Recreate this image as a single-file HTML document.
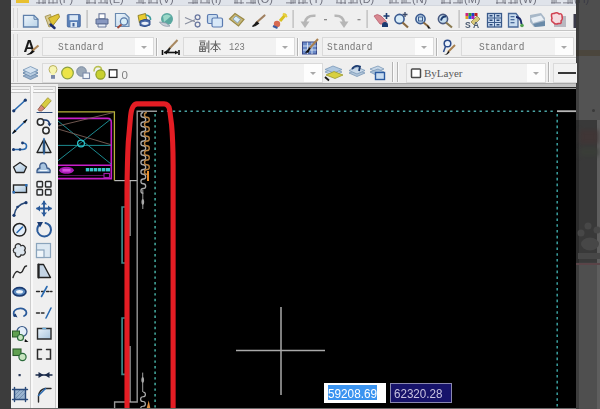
<!DOCTYPE html>
<html><head><meta charset="utf-8"><style>
*{margin:0;padding:0;box-sizing:border-box}
html,body{width:600px;height:409px;overflow:hidden;background:#3d3d3d;font-family:"Liberation Sans",sans-serif}
.a{position:absolute}
.hl{height:1px}
.grip{width:1px;background:#d6d6d6}
.combo{background:#f2f2f2;border:1px solid #dadada;font-family:"Liberation Mono",monospace;font-size:12px;color:#767676;overflow:hidden;white-space:nowrap}
.combo .ar{position:absolute;right:0;top:0;width:18px;height:100%;background:#fdfdfd}
.combo .ar:after{content:"";position:absolute;left:6px;top:8px;border-left:3.5px solid transparent;border-right:3.5px solid transparent;border-top:3.5px solid #a8a8a8}
.sep{width:2px;border-left:1px solid #b4b4b4;border-right:1px solid #fbfbfb}
.mt{position:absolute;top:-9px;font-size:12px;color:#1a1a1a;white-space:nowrap}
</style></head><body><div style="position:absolute;left:0;top:0;width:600px;height:409px;overflow:hidden;filter:blur(0.4px)">
<div class="a" style="left:0;top:0;width:11px;height:409px;background:#3c3c3c"></div>
<div class="a" style="left:576px;top:0;width:24px;height:50px;background:#4e4e4e"></div>
<div class="a" style="left:576px;top:50px;width:24px;height:6px;background:#4b463d"></div>
<div class="a" style="left:576px;top:56px;width:24px;height:64px;background:#535353"></div>
<div class="a" style="left:576px;top:120px;width:24px;height:142px;background:#393939"></div>
<div class="a" style="left:576px;top:264px;width:24px;height:145px;background:#4f4f4f"></div>
<div class="a" style="left:576px;top:0;width:3px;height:409px;background:rgba(0,0,0,0.22)"></div>
<div class="a" style="left:597px;top:120px;width:3px;height:289px;background:#5e5e5e"></div>
<div class="a" style="left:580px;top:130px;width:18px;height:14px;background:#403636;filter:blur(2px)"></div>
<div class="a" style="left:580px;top:148px;width:18px;height:8px;background:#3a3e38;filter:blur(2px)"></div>
<svg class="a" style="left:576px;top:200px" width="24" height="70"><g fill="#474747"><circle cx="12" cy="26" r="3.5"/><circle cx="21" cy="30" r="3.5"/><circle cx="5" cy="33" r="3.5"/><ellipse cx="14" cy="44" rx="9" ry="6.5"/><rect x="2" y="53" width="22" height="6"/></g><rect x="0" y="63" width="24" height="2" fill="#5a4448"/></svg>
<div class="a" style="left:592px;top:109px;width:3px;height:3px;border-radius:50%;background:#3a3a3a"></div>
<div class="a" style="left:11px;top:0;width:565px;height:89px;background:#efefef"></div>
<div class="a" style="left:11px;top:0;width:565px;height:5px;background:#dfe3ea;overflow:hidden"><div class="a" style="left:5px;top:0;width:13px;height:3px;background:#e8c030"></div></div>
<div class="a hl" style="left:11px;top:5px;width:565px;background:#d3d7de"></div>
<div class="a hl" style="left:11px;top:30px;width:565px;background:#c4c4c4"></div>
<div class="a hl" style="left:11px;top:31px;width:565px;background:#fafafa"></div>
<div class="a hl" style="left:11px;top:57px;width:565px;background:#c4c4c4"></div>
<div class="a hl" style="left:11px;top:58px;width:565px;background:#fafafa"></div>
<div class="a hl" style="left:11px;top:83px;width:565px;background:#a8a8a8"></div>
<div class="a" style="left:11px;top:84px;width:565px;height:3px;background:#ececec"></div>
<div class="a grip" style="left:13px;top:8px;height:20px"></div>
<div class="a grip" style="left:17px;top:8px;height:20px"></div>
<div class="a grip" style="left:13px;top:34px;height:22px"></div>
<div class="a grip" style="left:17px;top:34px;height:22px"></div>
<div class="a grip" style="left:13px;top:60px;height:22px"></div>
<div class="a grip" style="left:17px;top:60px;height:22px"></div>
<div class="a combo" style="left:42px;top:37px;width:112px;height:19px"><span class="a" style="left:15px;top:2px;font-size:11px;transform:scaleX(0.86);transform-origin:0 0;line-height:14px">Standard</span><div class="ar"></div></div>
<div class="a sep" style="left:156px;top:38px;height:18px"></div>
<div class="a combo" style="left:183px;top:37px;width:112px;height:19px"><span class="a" style="left:44.5px;top:2px;font-size:11px;line-height:14px;transform:scaleX(0.8);transform-origin:0 0;color:#7a7a7a">123</span><div class="ar"></div></div>
<div class="a sep" style="left:297px;top:38px;height:18px"></div>
<div class="a combo" style="left:322px;top:37px;width:112px;height:19px"><span class="a" style="left:4px;top:2px;font-size:11px;transform:scaleX(0.86);transform-origin:0 0;line-height:14px">Standard</span><div class="ar"></div></div>
<div class="a sep" style="left:436px;top:38px;height:18px"></div>
<div class="a combo" style="left:461px;top:37px;width:113px;height:19px"><span class="a" style="left:17px;top:2px;font-size:11px;transform:scaleX(0.86);transform-origin:0 0;line-height:14px">Standard</span><div class="ar"></div></div>
<div class="a combo" style="left:42px;top:63px;width:281px;height:20px"><div class="ar"></div></div>
<div class="a sep" style="left:392px;top:62px;height:20px"></div>
<div class="a sep" style="left:397px;top:62px;height:20px"></div>
<div class="a combo" style="left:406px;top:63px;width:140px;height:20px"><span class="a" style="left:17px;top:3px;font-family:Liberation Serif;font-size:11px;line-height:13px;color:#5a5a5a">ByLayer</span><div class="ar"></div></div>
<div class="a sep" style="left:548px;top:62px;height:20px"></div>
<div class="a combo" style="left:553px;top:63px;width:24px;height:20px;border-right:none"></div>
<div class="a" style="left:11px;top:84px;width:47px;height:325px;background:#efefef"></div>
<div class="a" style="left:11px;top:86px;width:20px;height:1px;background:#c4c4c4"></div>
<div class="a" style="left:12px;top:89px;width:17px;height:1px;background:#cacaca"></div>
<div class="a" style="left:12px;top:90px;width:17px;height:2px;background:#fbfbfb"></div>
<div class="a" style="left:11px;top:92px;width:20px;height:1px;background:#c2c2c2"></div>
<div class="a" style="left:33px;top:86px;width:22px;height:1px;background:#c4c4c4"></div>
<div class="a" style="left:34px;top:89px;width:19px;height:1px;background:#cacaca"></div>
<div class="a" style="left:34px;top:90px;width:19px;height:2px;background:#fbfbfb"></div>
<div class="a" style="left:33px;top:92px;width:22px;height:1px;background:#c2c2c2"></div>
<div class="a" style="left:30px;top:86px;width:1px;height:323px;background:#cdcdcd"></div>
<div class="a" style="left:31px;top:86px;width:2px;height:323px;background:#f8f8f8"></div>
<div class="a" style="left:55px;top:86px;width:1px;height:323px;background:#c8c8c8"></div>
<div class="a" style="left:56px;top:86px;width:2px;height:323px;background:#f4f4f4"></div>
<div class="a" style="left:58px;top:84px;width:518px;height:3px;background:#c6c6c6"></div>
<div class="a" style="left:58px;top:87px;width:518px;height:1px;background:#2e2e2e"></div>
<div class="a" style="left:58px;top:88px;width:518px;height:1px;background:#9a9a9a"></div>
<div class="a" style="left:58px;top:89px;width:518px;height:320px;background:#000"></div>
<div class="a" style="left:11px;top:408px;width:565px;height:1px;background:#6a6a6a"></div>
<svg class="a" style="left:0;top:0" width="600" height="409" viewBox="0 0 600 409">
<defs>
<linearGradient id="lb" x1="0" y1="0" x2="1" y2="1"><stop offset="0" stop-color="#eef5fb"/><stop offset="1" stop-color="#b9d3e8"/></linearGradient>
<linearGradient id="yl" x1="0" y1="0" x2="1" y2="1"><stop offset="0" stop-color="#f4e070"/><stop offset="1" stop-color="#c8a820"/></linearGradient>
</defs>
<!-- menu text fragments -->
<g fill="#303040" opacity="0.65">
<rect x="36" y="2.3" width="10" height="1.1" opacity="0.75"/>
<rect x="38.5" y="0" width="1.1" height="4" opacity="0.8"/>
<rect x="44.5" y="0" width="1.1" height="3.5" opacity="0.8"/>
<rect x="42.5" y="0" width="1.1" height="4" opacity="0.8"/>
<rect x="48" y="2.3" width="10" height="1.1" opacity="0.75"/>
<rect x="56.5" y="0" width="1.1" height="2.5" opacity="0.8"/>
<rect x="48.5" y="0" width="1.1" height="3.5" opacity="0.8"/>
<rect x="52.5" y="0" width="1.1" height="3.5" opacity="0.8"/>
<text x="59" y="3.2" font-family="Liberation Sans" font-size="11" fill="#303040">(F)</text>
<rect x="86" y="2.3" width="10" height="1.1" opacity="0.75"/>
<rect x="94.5" y="0" width="1.1" height="4" opacity="0.8"/>
<rect x="88.5" y="0" width="1.1" height="3.5" opacity="0.8"/>
<rect x="86.5" y="0" width="1.1" height="4" opacity="0.8"/>
<rect x="98" y="2.3" width="10" height="1.1" opacity="0.75"/>
<rect x="106.5" y="0" width="1.1" height="4" opacity="0.8"/>
<rect x="104.5" y="0" width="1.1" height="2.5" opacity="0.8"/>
<rect x="100.5" y="0" width="1.1" height="2.5" opacity="0.8"/>
<text x="109" y="3.2" font-family="Liberation Sans" font-size="11" fill="#303040">(E)</text>
<rect x="136" y="2.3" width="10" height="1.1" opacity="0.75"/>
<rect x="138.5" y="0" width="1.1" height="2.5" opacity="0.8"/>
<rect x="142.5" y="0" width="1.1" height="4" opacity="0.8"/>
<rect x="140.5" y="0" width="1.1" height="2.5" opacity="0.8"/>
<rect x="148" y="2.3" width="10" height="1.1" opacity="0.75"/>
<rect x="150.5" y="0" width="1.1" height="2.5" opacity="0.8"/>
<rect x="148.5" y="0" width="1.1" height="3.5" opacity="0.8"/>
<rect x="156.5" y="0" width="1.1" height="3.5" opacity="0.8"/>
<text x="159" y="3.2" font-family="Liberation Sans" font-size="11" fill="#303040">(V)</text>
<rect x="188" y="2.3" width="10" height="1.1" opacity="0.75"/>
<rect x="196.5" y="0" width="1.1" height="3.5" opacity="0.8"/>
<rect x="194.5" y="0" width="1.1" height="3.5" opacity="0.8"/>
<rect x="192.5" y="0" width="1.1" height="4" opacity="0.8"/>
<rect x="200" y="2.3" width="10" height="1.1" opacity="0.75"/>
<rect x="208.5" y="0" width="1.1" height="3.5" opacity="0.8"/>
<rect x="206.5" y="0" width="1.1" height="2.5" opacity="0.8"/>
<rect x="200.5" y="0" width="1.1" height="2.5" opacity="0.8"/>
<text x="211" y="3.2" font-family="Liberation Sans" font-size="11" fill="#303040">(I)</text>
<rect x="234" y="2.3" width="10" height="1.1" opacity="0.75"/>
<rect x="236.5" y="0" width="1.1" height="3.5" opacity="0.8"/>
<rect x="240.5" y="0" width="1.1" height="4" opacity="0.8"/>
<rect x="234.5" y="0" width="1.1" height="3.5" opacity="0.8"/>
<rect x="246" y="2.3" width="10" height="1.1" opacity="0.75"/>
<rect x="250.5" y="0" width="1.1" height="3.5" opacity="0.8"/>
<rect x="252.5" y="0" width="1.1" height="4" opacity="0.8"/>
<rect x="254.5" y="0" width="1.1" height="3.5" opacity="0.8"/>
<text x="257" y="3.2" font-family="Liberation Sans" font-size="11" fill="#303040">(O)</text>
<rect x="286" y="2.3" width="10" height="1.1" opacity="0.75"/>
<rect x="294.5" y="0" width="1.1" height="2.5" opacity="0.8"/>
<rect x="292.5" y="0" width="1.1" height="3.5" opacity="0.8"/>
<rect x="290.5" y="0" width="1.1" height="4" opacity="0.8"/>
<rect x="298" y="2.3" width="10" height="1.1" opacity="0.75"/>
<rect x="298.5" y="0" width="1.1" height="4" opacity="0.8"/>
<rect x="302.5" y="0" width="1.1" height="4" opacity="0.8"/>
<rect x="304.5" y="0" width="1.1" height="2.5" opacity="0.8"/>
<text x="309" y="3.2" font-family="Liberation Sans" font-size="11" fill="#303040">(T)</text>
<rect x="336" y="2.3" width="10" height="1.1" opacity="0.75"/>
<rect x="340.5" y="0" width="1.1" height="4" opacity="0.8"/>
<rect x="336.5" y="0" width="1.1" height="2.5" opacity="0.8"/>
<rect x="344.5" y="0" width="1.1" height="4" opacity="0.8"/>
<rect x="348" y="2.3" width="10" height="1.1" opacity="0.75"/>
<rect x="356.5" y="0" width="1.1" height="2.5" opacity="0.8"/>
<rect x="352.5" y="0" width="1.1" height="2.5" opacity="0.8"/>
<rect x="350.5" y="0" width="1.1" height="3.5" opacity="0.8"/>
<text x="359" y="3.2" font-family="Liberation Sans" font-size="11" fill="#303040">(D)</text>
<rect x="389" y="2.3" width="10" height="1.1" opacity="0.75"/>
<rect x="395.5" y="0" width="1.1" height="2.5" opacity="0.8"/>
<rect x="389.5" y="0" width="1.1" height="3.5" opacity="0.8"/>
<rect x="391.5" y="0" width="1.1" height="2.5" opacity="0.8"/>
<rect x="401" y="2.3" width="10" height="1.1" opacity="0.75"/>
<rect x="401.5" y="0" width="1.1" height="3.5" opacity="0.8"/>
<rect x="405.5" y="0" width="1.1" height="2.5" opacity="0.8"/>
<rect x="403.5" y="0" width="1.1" height="2.5" opacity="0.8"/>
<text x="412" y="3.2" font-family="Liberation Sans" font-size="11" fill="#303040">(N)</text>
<rect x="441" y="2.3" width="10" height="1.1" opacity="0.75"/>
<rect x="449.5" y="0" width="1.1" height="4" opacity="0.8"/>
<rect x="441.5" y="0" width="1.1" height="4" opacity="0.8"/>
<rect x="443.5" y="0" width="1.1" height="3.5" opacity="0.8"/>
<rect x="453" y="2.3" width="10" height="1.1" opacity="0.75"/>
<rect x="461.5" y="0" width="1.1" height="2.5" opacity="0.8"/>
<rect x="457.5" y="0" width="1.1" height="2.5" opacity="0.8"/>
<rect x="459.5" y="0" width="1.1" height="3.5" opacity="0.8"/>
<text x="464" y="3.2" font-family="Liberation Sans" font-size="11" fill="#303040">(M)</text>
<rect x="496" y="2.3" width="10" height="1.1" opacity="0.75"/>
<rect x="496.5" y="0" width="1.1" height="4" opacity="0.8"/>
<rect x="504.5" y="0" width="1.1" height="4" opacity="0.8"/>
<rect x="502.5" y="0" width="1.1" height="2.5" opacity="0.8"/>
<rect x="508" y="2.3" width="10" height="1.1" opacity="0.75"/>
<rect x="510.5" y="0" width="1.1" height="4" opacity="0.8"/>
<rect x="514.5" y="0" width="1.1" height="3.5" opacity="0.8"/>
<rect x="516.5" y="0" width="1.1" height="2.5" opacity="0.8"/>
<text x="519" y="3.2" font-family="Liberation Sans" font-size="11" fill="#303040">(W)</text>
<rect x="551" y="2.3" width="10" height="1.1" opacity="0.75"/>
<rect x="551.5" y="0" width="1.1" height="3.5" opacity="0.8"/>
<rect x="555.5" y="0" width="1.1" height="2.5" opacity="0.8"/>
<rect x="553.5" y="0" width="1.1" height="3.5" opacity="0.8"/>
<rect x="563" y="2.3" width="10" height="1.1" opacity="0.75"/>
<rect x="569.5" y="0" width="1.1" height="3.5" opacity="0.8"/>
<rect x="571.5" y="0" width="1.1" height="4" opacity="0.8"/>
<rect x="567.5" y="0" width="1.1" height="4" opacity="0.8"/>
<text x="574" y="3.2" font-family="Liberation Sans" font-size="11" fill="#303040">(H)</text>
</g>
<!-- toolbar 1 -->
<path d="M23.5,15.3 H34 L38,19.3 V27 H23.5 Z" fill="url(#lb)" stroke="#5f80ab" stroke-width="1.3"/>
<path d="M34,15.3 V19.3 H38" fill="none" stroke="#5f80ab" stroke-width="1"/>
<path d="M45,16.5 L50.5,14.5 L53,25.5 L49,27 Z" fill="#d8cc98" stroke="#a89858" stroke-width="1"/>
<path d="M48.5,18 L58.5,14 L59.5,17 L52.5,26 Z" fill="#e0c438" stroke="#a89028" stroke-width="1"/>
<path d="M50.5,24.5 L54.5,28" stroke="#1e2e70" stroke-width="2.5" stroke-linecap="round"/>
<rect x="67.3" y="14.5" width="13" height="12.5" rx="1" fill="#5a80b8" stroke="#40629a" stroke-width="0.8"/>
<rect x="69.5" y="15.2" width="8.5" height="5" fill="#dce8f4"/>
<rect x="70.5" y="22" width="6.5" height="5" fill="#dce8f4"/><rect x="72.5" y="23" width="2" height="3.5" fill="#40629a"/>
<rect x="86.5" y="10" width="1.2" height="18" fill="#b8b8b8"/>
<!-- print -->
<rect x="99" y="13.8" width="6" height="5" fill="#fff" stroke="#5a6a90" stroke-width="1"/>
<path d="M96,19 H108 V24 H96 Z" fill="#8898c0" stroke="#5a6a90" stroke-width="1"/>
<path d="M98,24 H106 V27 H98 Z" fill="#e8eef8" stroke="#5a6a90" stroke-width="0.9"/>
<!-- preview -->
<path d="M115.5,13.5 H125 L129,17.5 V26.5 H115.5 Z" fill="url(#lb)" stroke="#6a8ab0" stroke-width="1.2"/>
<circle cx="124" cy="21.5" r="3.6" fill="#d8eef8" stroke="#5a7aa8" stroke-width="1.3"/>
<line x1="121.5" y1="24.5" x2="117.5" y2="28" stroke="#a04838" stroke-width="1.8"/>
<!-- publish -->
<path d="M138,15.5 L145.5,13.5 L147,21.5 L139.5,23 Z" fill="#e8cc30" stroke="#8a7a20" stroke-width="0.9"/>
<path d="M140,21 Q145,18 150,20.5 V25 Q145,28 140,25.5 Z" fill="#4a6aa8" stroke="#2a4a88" stroke-width="0.9"/>
<path d="M141.5,22.5 Q145,21 148.5,22.5 V24 Q145,26 141.5,24 Z" fill="#e8eef8"/>
<path d="M146,15 Q151,16 150.5,20" stroke="#3a9a9a" stroke-width="1.6" fill="none"/>
<!-- 3D dwf -->
<circle cx="167" cy="19" r="6" fill="#5aa8a0"/>
<path d="M163,16 Q167,13 171,16 Q168,19 164,22 Z" fill="#9ad8c8"/>
<path d="M159.5,22 Q163,27.5 170,26 L166,23 Z" fill="#c8d0d8" stroke="#8a98a8" stroke-width="0.8"/>
<rect x="178.5" y="10" width="1.2" height="18" fill="#b8b8b8"/>
<!-- cut -->
<path d="M185,17.5 L195,21.8 M185,24 L195,19.8" stroke="#8a90a0" stroke-width="1.2" fill="none"/>
<circle cx="197.6" cy="17.2" r="2.4" fill="none" stroke="#6a78a0" stroke-width="1.3"/>
<circle cx="197.6" cy="24.6" r="2.4" fill="none" stroke="#6a78a0" stroke-width="1.3"/>
<!-- copy -->
<rect x="207.5" y="14.5" width="10" height="9" rx="1.5" fill="#c8dcf0" stroke="#5a7ab0" stroke-width="1.2"/>
<rect x="212" y="18" width="10.5" height="9" rx="1.5" fill="#d8e8f8" stroke="#5a7ab0" stroke-width="1.2"/>
<!-- paste -->
<path d="M229.5,19 L235,13.5 L244,19.5 L238.5,26 Z" fill="#c8b878" stroke="#9a8a48" stroke-width="1.2"/>
<path d="M233,19 L236,16 L240.5,19.5 L237.5,23 Z" fill="#d8ecf8" stroke="#7a9ab8" stroke-width="0.8"/>
<!-- brush -->
<path d="M264.5,15.5 L256,23" stroke="#a08060" stroke-width="2.2" stroke-linecap="round"/>
<path d="M257,22 L252.5,26.5 L255.5,25.5 L258.5,23.5 Z" fill="#1a1a1a" stroke="#1a1a1a" stroke-width="1.2"/>
<!-- brush2 -->
<path d="M286,14 L280,21" stroke="#d8c020" stroke-width="3"/>
<path d="M283,13.5 L287,17" stroke="#e8d040" stroke-width="2"/>
<circle cx="277" cy="24" r="3.2" fill="#d86a50"/>
<path d="M273,26 L277.5,28" stroke="#3a5aa0" stroke-width="2"/>
<rect x="292.5" y="10" width="1.2" height="18" fill="#b8b8b8"/>
<!-- undo/redo -->
<path d="M315.5,15.8 Q306,15 305,22.5" fill="none" stroke="#b6b6b6" stroke-width="2.6"/>
<path d="M300.5,21.5 L309.5,21.5 L305,28 Z" fill="#b6b6b6"/>
<path d="M334.5,15.8 Q343,15 344,22.5" fill="none" stroke="#b6b6b6" stroke-width="2.6"/>
<path d="M339.5,21.5 L348.5,21.5 L344,28 Z" fill="#b6b6b6"/>
<rect x="324" y="19" width="3" height="1.3" fill="#8a8a8a"/>
<rect x="357.5" y="19" width="3" height="1.3" fill="#8a8a8a"/>
<rect x="366.5" y="10" width="1.2" height="18" fill="#b8b8b8"/>
<!-- pan -->
<path d="M374,16 Q377,13 381,16 L386.5,21.5 Q384,25 380,24 Z" fill="#d88890" stroke="#b86070" stroke-width="0.8"/>
<path d="M382,25 A3,3 0 0 1 388,25 V27 H382 Z" fill="#1a3a70"/>
<path d="M386.5,13 V19 M383.5,16 H389.5" stroke="#1a3a70" stroke-width="1.6"/>
<!-- zoom realtime -->
<circle cx="399.5" cy="19" r="4.6" fill="#d8ecf8" stroke="#3a5a90" stroke-width="1.6"/>
<line x1="402.5" y1="22.5" x2="408" y2="27.5" stroke="#8a6a40" stroke-width="2.2"/>
<path d="M405,12 V17 M402.5,14.5 H407.5" stroke="#3a4a6a" stroke-width="1.3"/>
<!-- zoom window -->
<circle cx="420.5" cy="19" r="4.6" fill="#c8e0f0" stroke="#3a5a90" stroke-width="1.6"/>
<rect x="418.5" y="17" width="4" height="4" fill="none" stroke="#3a5a90" stroke-width="1"/>
<line x1="423.5" y1="22.5" x2="429" y2="27" stroke="#8a6a40" stroke-width="2"/>
<path d="M427,25 L431,28.5 L428,28.5 Z" fill="#111"/>
<!-- zoom prev -->
<circle cx="443" cy="19" r="4.6" fill="#c8e0f0" stroke="#4a5a80" stroke-width="1.6"/>
<path d="M441,20.5 Q442,16 446,16.5" fill="none" stroke="#1a3a70" stroke-width="2"/>
<line x1="446" y1="22.5" x2="452" y2="27.5" stroke="#8a7a50" stroke-width="2.2"/>
<rect x="458.5" y="10" width="1.2" height="18" fill="#b8b8b8"/>
<!-- properties -->
<rect x="465.5" y="13" width="3" height="3" fill="#d02080"/><rect x="468.5" y="13" width="3" height="3" fill="#30a030"/><rect x="471.5" y="13" width="3" height="3" fill="#2040c0"/><rect x="474.5" y="13" width="3" height="3" fill="#c02020"/>
<rect x="465.5" y="16" width="3" height="3" fill="#e0a020"/><rect x="468.5" y="16" width="3" height="3" fill="#2060e0"/><rect x="471.5" y="16" width="3" height="3" fill="#a020c0"/>
<path d="M477,16 L480,19 L474,25 L471,22 Z" fill="#d8c878" stroke="#8a7a40" stroke-width="0.7"/>
<text x="465" y="27.5" font-family="Liberation Sans" font-size="8.5" font-weight="bold" fill="#4a5a70">S</text>
<text x="473" y="27.5" font-family="Liberation Sans" font-size="8.5" font-weight="bold" fill="#4a5a70">A</text>
<!-- design center -->
<rect x="487.5" y="13.5" width="14" height="13.5" fill="#c8daf0" stroke="#3a5a8a" stroke-width="1.3"/>
<g stroke="#3a5a8a" stroke-width="1"><line x1="494.5" y1="14" x2="494.5" y2="27"/><line x1="488" y1="18" x2="501" y2="18"/><line x1="488" y1="22.5" x2="501" y2="22.5"/></g>
<g fill="#2a4a7a"><rect x="489.5" y="15" width="3" height="1.5"/><rect x="496.5" y="15" width="3" height="1.5"/><rect x="489.5" y="19.5" width="3" height="1.5"/><rect x="496.5" y="19.5" width="3" height="1.5"/><rect x="489.5" y="24" width="3" height="1.5"/><rect x="496.5" y="24" width="3" height="1.5"/></g>
<!-- tool palettes -->
<path d="M508.5,13.5 H516 L518,16 V27 H508.5 Z" fill="#c8dcf0" stroke="#4a6a9a" stroke-width="1.3"/>
<g fill="#4a6a9a"><rect x="510.5" y="16" width="4" height="1.3"/><rect x="510.5" y="19" width="4" height="1.3"/><rect x="510.5" y="22" width="4" height="1.3"/></g>
<path d="M516,17 Q521,17 521.5,24" fill="none" stroke="#1a2a6a" stroke-width="2"/>
<circle cx="522" cy="25.5" r="1.8" fill="#50a050"/>
<!-- sheet set -->
<path d="M530,15 L541,13 L545,18 L545,26 L534,27 L530,22 Z" fill="#a8b8c8"/>
<path d="M531,18 L541,15.5 L544,20 L533,23 Z" fill="#e8eef4"/>
<path d="M533,24 L545,21 V26 L535,27 Z" fill="#6a8aa8"/>
<!-- markup -->
<rect x="554" y="16" width="12" height="11" fill="#b8b8c0"/>
<path d="M551.5,16 Q551,13 554,13.5 Q557,12 559,14 Q562,13 562,16 Q563,19 561,21 Q562,24 558.5,23.5 Q555,25 553.5,22.5 Q550.5,21 552,18.5 Z" fill="#f4dce0" stroke="#d04050" stroke-width="1.5"/>
<!-- toolbar 2 icons -->
<text x="23.5" y="52" font-family="Liberation Sans" font-size="16" font-weight="bold" fill="#1a1a1a">A</text>
<path d="M38.5,45.5 L32,51" stroke="#b08858" stroke-width="2.2"/>
<path d="M32.5,50 Q30,53.5 26.5,54.5 Q31,55.5 34,52 Z" fill="#101010"/>
<path d="M177.5,40 L169,49" stroke="#a88860" stroke-width="2"/>
<path d="M170,48 L166.5,51.5 L168.5,51 Z" fill="#222" stroke="#222" stroke-width="1.5"/>
<path d="M164,52.5 H178" stroke="#101010" stroke-width="1.6"/>
<path d="M162.5,50 V55 M179,50 V55" stroke="#101010" stroke-width="1.6"/>
<path d="M164,52.5 L167,50.5 V54.5 Z M178,52.5 L175,50.5 V54.5 Z" fill="#101010"/>
<!-- table style -->
<rect x="302.5" y="42" width="14" height="12" fill="#6a8ac8" stroke="#3a4a8a" stroke-width="1"/>
<g stroke="#dce6f4" stroke-width="0.9"><line x1="303" y1="46" x2="316.5" y2="46"/><line x1="303" y1="50" x2="316.5" y2="50"/><line x1="307.5" y1="42.5" x2="307.5" y2="54"/><line x1="312" y1="42.5" x2="312" y2="54"/></g>
<path d="M318,39 L309,49" stroke="#a88050" stroke-width="2"/>
<path d="M310,48 L306.5,52 L308,52 Z" fill="#111" stroke="#111" stroke-width="1.4"/>
<!-- multileader style -->
<circle cx="447.5" cy="43.5" r="3.3" fill="#e8f0fa" stroke="#2a4a8a" stroke-width="1.5"/>
<path d="M445.5,46.5 L443.5,52" stroke="#2a4a8a" stroke-width="1.5"/>
<path d="M455,45 L448,52" stroke="#a88050" stroke-width="2"/>
<path d="M448.5,51 Q447,54 444,55 Q447.5,55 449.5,52.5 Z" fill="#111"/>
<!-- dim arrow in combos drawn by css -->
<g stroke="#6a6a6a" stroke-width="1.1" fill="none">
<path d="M199.5,41 H205.5 M200.5,42.8 H204.5 V45 H200.5 Z M199.7,46.8 H205.3 V51.5 H199.7 Z M202.5,46.8 V51.5 M199.7,49.1 H205.3 M207,42.5 V49 M208.8,40.5 V52 L207.8,51.5"/>
<path d="M210.5,44 H220.5 M215.5,40.5 V52 M215,44.5 L210.5,50 M216,44.5 L220.5,50 M213,49.5 H218"/>
</g>
<!-- toolbar 3 icons -->
<path d="M23,73 L30.5,69.5 L38,73 L30.5,76.5 Z" fill="#a8bcd4" stroke="#6a88a8" stroke-width="0.8"/>
<path d="M23,70.5 L30.5,67 L38,70.5 L30.5,74 Z" fill="#c4d4e6" stroke="#7a98b8" stroke-width="0.8"/>
<path d="M23,76 L30.5,72.5 L38,76 L30.5,79.5 Z" fill="#98b0cc" stroke="#6a88a8" stroke-width="0.8"/>
<path d="M23,73 L30.5,69.5 L38,73 L30.5,76.5 Z" fill="#b8cce0" stroke="#6a88a8" stroke-width="0.8"/>
<path d="M23,70 L30.5,66.5 L38,70 L30.5,73.5 Z" fill="#d4e2f0" stroke="#7a98b8" stroke-width="0.8"/>
<!-- bulb -->
<circle cx="53" cy="69.5" r="4" fill="#f6f4b0" stroke="#b8b060" stroke-width="1"/>
<path d="M50.5,72 L51.5,75 H54.5 L55.5,72 Z" fill="#f6f4b0"/>
<rect x="51" y="75" width="4" height="3.8" fill="#7a88a8"/>
<!-- sun -->
<circle cx="67.5" cy="73" r="5.8" fill="#ece448" stroke="#8aa040" stroke-width="1.2"/>
<!-- freeze -->
<circle cx="81.5" cy="71.5" r="4.8" fill="#9aa8b8" stroke="#7a8aa0" stroke-width="1"/>
<rect x="83" y="73" width="6.5" height="5.5" fill="#f4f8fc" stroke="#7a8aa8" stroke-width="1.1"/>
<!-- lock -->
<path d="M94,71.5 Q94,66.5 98.5,66.5 Q102,67 101.5,71" fill="none" stroke="#b8c050" stroke-width="1.4"/>
<circle cx="100.5" cy="74.5" r="4.6" fill="#c8d030" stroke="#8a9a20" stroke-width="1.1"/>
<rect x="109.3" y="69.8" width="7.6" height="7.6" fill="#fff" stroke="#2a2a2a" stroke-width="1.3"/>
<text x="121.5" y="78.5" font-family="Liberation Sans" font-size="11.5" fill="#808080">0</text>
<!-- layer make current etc -->
<path d="M325,72 L333,68.5 L342,72 L334,75.5 Z" fill="#c8d8e8" stroke="#7a98b8" stroke-width="0.8"/>
<path d="M325,69.5 L333,66 L342,69.5 L334,73 Z" fill="#b0c8e0" stroke="#7a98b8" stroke-width="0.8"/>
<path d="M326,75 L334,71.5 L343,75 L335,78.5 Z" fill="#d8d040" stroke="#9a9a30" stroke-width="0.8"/>
<path d="M325,77 L329,80.5" stroke="#1a1a1a" stroke-width="1.8"/>
<path d="M349,73 L357,69.5 L365,73 L357,76.5 Z" fill="#b0c4d8" stroke="#7a98b8" stroke-width="0.8"/>
<path d="M349,70.5 L357,67 L365,70.5 L357,74 Z" fill="#c8d8e8" stroke="#7a98b8" stroke-width="0.8"/>
<path d="M352,69 Q355,64.5 360,66.5 L359,71" fill="none" stroke="#1a3a70" stroke-width="1.8"/>
<path d="M370,69 L378,66 L384,69 L376,72 Z" fill="#c8d8e8" stroke="#7a98b8" stroke-width="0.8"/>
<path d="M370,72 L378,69 L384,72 L376,75 Z" fill="#a8c0d8" stroke="#7a98b8" stroke-width="0.8"/>
<rect x="375.5" y="72.5" width="9" height="7" fill="#c8dcf0" stroke="#2a5aa0" stroke-width="1.4"/>
<rect x="411.5" y="69" width="9" height="8.5" rx="0.8" fill="#fff" stroke="#4a4a4a" stroke-width="1.5"/>
<line x1="558" y1="73" x2="576" y2="73" stroke="#222" stroke-width="1.8"/>
<rect x="573.5" y="14" width="2.5" height="14" fill="#3a3a48"/>
</svg>

<svg class="a" style="left:0;top:0" width="600" height="409" viewBox="0 0 600 409">
<defs>
<linearGradient id="pb" x1="0" y1="0" x2="1" y2="1"><stop offset="0" stop-color="#e8f2fa"/><stop offset="1" stop-color="#a8c4dc"/></linearGradient>
</defs>
<g stroke-linecap="round">
<!-- panel 1 -->
<!-- line -->
<line x1="13.5" y1="111" x2="25.5" y2="100" stroke="#2a6ab0" stroke-width="1.6"/>
<circle cx="13.8" cy="110.8" r="1.6" fill="#1a3a70"/><circle cx="25.3" cy="100.2" r="1.6" fill="#1a3a70"/>
<!-- xline -->
<line x1="13" y1="133" x2="26.5" y2="120" stroke="#2a6ab0" stroke-width="1.6"/>
<path d="M12,134 L16.5,131.5 L14.5,129.5 Z" fill="#111"/><path d="M27.5,119 L23,121.5 L25,123.5 Z" fill="#111"/>
<!-- pline -->
<path d="M13,149.5 H22.5 Q26.5,149.5 26.5,146 Q26.5,143 22.5,143" fill="none" stroke="#2a6ab0" stroke-width="1.6"/>
<circle cx="13.5" cy="149.5" r="1.5" fill="#1a3a70"/><circle cx="20" cy="149.5" r="1.3" fill="#1a3a70"/><circle cx="22.5" cy="143" r="1.4" fill="#1a3a70"/>
<!-- polygon -->
<path d="M20,162.5 L26.5,167 L24,172.5 H16 L13.5,167 Z" fill="url(#pb)" stroke="#222" stroke-width="1.3" stroke-linejoin="round"/>
<!-- rect -->
<rect x="13.5" y="185" width="13" height="7.5" fill="url(#pb)" stroke="#222" stroke-width="1.4"/>
<rect x="12.5" y="191" width="2.5" height="2.5" fill="#2a6ab0"/><rect x="25" y="184" width="2.5" height="2.5" fill="#2a6ab0"/>
<!-- arc -->
<path d="M14,215.5 Q15.5,205 26,202.5" fill="none" stroke="#2a4a78" stroke-width="1.6"/>
<circle cx="14" cy="215.3" r="1.6" fill="#1a3a70"/><circle cx="26" cy="202.7" r="1.6" fill="#1a3a70"/><circle cx="17.5" cy="207" r="1.3" fill="#1a3a70"/>
<!-- circle -->
<circle cx="19.5" cy="229.8" r="6.3" fill="#e4eef8" stroke="#222" stroke-width="1.5"/>
<line x1="17" y1="232.5" x2="22.5" y2="227" stroke="#2a6ab0" stroke-width="1.6"/>
<!-- revcloud -->
<path d="M20.98,245.76 A2.9,2.9 0 0 1 24.50,250.23 A2.9,2.9 0 0 1 21.11,254.80 A2.9,2.9 0 0 1 15.50,253.15 A2.9,2.9 0 0 1 15.41,247.56 A2.9,2.9 0 0 1 20.98,245.76 Z" fill="#dde6ee" stroke="#333" stroke-width="1.3"/>
<!-- spline -->
<path d="M13,277.5 Q15.5,270 18.5,272 Q21.5,274.5 23.5,269 Q25,265.5 26.5,266" fill="none" stroke="#2a2a2a" stroke-width="1.4"/>
<!-- ellipse -->
<ellipse cx="19.5" cy="291.8" rx="6.5" ry="4.2" fill="#5a8ac0" stroke="#1a3a70" stroke-width="1.6"/>
<ellipse cx="19.5" cy="291.8" rx="3.5" ry="1.8" fill="#eef4fa"/>
<!-- ellipse arc -->
<path d="M14.5,316 Q12,311 17,309 Q23,307 26,311 Q27.5,314.5 24,316" fill="none" stroke="#2a5a9a" stroke-width="1.8"/>
<path d="M13,316 L17.5,317.5 L15.5,313.5 Z" fill="#1a3a70"/>
<!-- insert -->
<circle cx="22" cy="331.5" r="5" fill="#e4eef8" stroke="#3a5a88" stroke-width="1.2"/>
<rect x="12.5" y="331" width="7" height="6" fill="#60a050" stroke="#2a5a2a" stroke-width="1"/>
<circle cx="20.5" cy="337.5" r="3" fill="#c8e4c0" stroke="#2a6a3a" stroke-width="1.2"/>
<path d="M25,339 L28.5,342 L24.5,342 Z" fill="#111"/>
<!-- make block -->
<rect x="13" y="349" width="8" height="6.5" fill="#60a050" stroke="#2a5a2a" stroke-width="1.1"/>
<circle cx="22.5" cy="357" r="3.6" fill="#c8e4c0" stroke="#2a6a3a" stroke-width="1.2"/>
<!-- point -->
<rect x="18.5" y="374" width="2.2" height="2.2" fill="#2a3a5a"/>
<!-- hatch -->
<rect x="14.5" y="389.5" width="11" height="10" fill="#9ab4d0"/>
<g stroke="#6a88a8" stroke-width="0.8"><line x1="15" y1="395" x2="20" y2="390"/><line x1="15" y1="399" x2="24" y2="390"/><line x1="19" y1="399" x2="25" y2="393"/></g>
<g stroke="#2a4a7a" stroke-width="1.4"><line x1="12.5" y1="389.5" x2="27.5" y2="389.5"/><line x1="12.5" y1="399.5" x2="27.5" y2="399.5"/><line x1="14.5" y1="387.5" x2="14.5" y2="401.5"/><line x1="25.5" y1="387.5" x2="25.5" y2="401.5"/></g>
<!-- panel 2 -->
<!-- erase -->
<path d="M51,101 L44.5,108.5 L41,105.5 L47.5,98 Z" fill="#d8cc40" stroke="#9a9020" stroke-width="0.8"/>
<path d="M44.5,108.5 L41.5,111 Q38.5,111.5 38,109.5 L41,105.5 Z" fill="#d88878" stroke="#885040" stroke-width="0.8"/>
<line x1="37" y1="112.5" x2="52" y2="112.5" stroke="#2a4a78" stroke-width="1.2"/>
<!-- copy -->
<circle cx="40.5" cy="122" r="3.2" fill="#f4f8fc" stroke="#2a2a2a" stroke-width="1.5"/>
<circle cx="46" cy="130.5" r="3.2" fill="#f4f8fc" stroke="#2a2a2a" stroke-width="1.5"/>
<path d="M44,120 Q49,119.5 49.5,124" fill="none" stroke="#1a3a70" stroke-width="1.6"/>
<path d="M47.5,123.5 L51.5,123.5 L49.5,126.5 Z" fill="#1a3a70"/>
<!-- mirror -->
<path d="M43.5,140 L37,152.5 H43.5 Z" fill="#dde8f0" stroke="#222" stroke-width="1.4" stroke-linejoin="round"/>
<path d="M44.5,140 L51,152.5 H44.5 Z" fill="#dde8f0" stroke="#222" stroke-width="1.4" stroke-linejoin="round"/>
<line x1="44" y1="138.5" x2="44" y2="154" stroke="#2a6ab0" stroke-width="1.4"/>
<!-- offset -->
<path d="M37,172.5 H50 Q51,168.5 47,168 Q46.5,162.5 42.5,163 Q39,163.5 40,168 Q36.5,168.5 37,172.5 Z" fill="#a8c4e0" stroke="#3a5a8a" stroke-width="1.3"/>
<path d="M40,170.5 H47" stroke="#f0f6fc" stroke-width="1.2"/>
<!-- array -->
<g fill="#f4f8fc" stroke="#2a2a2a" stroke-width="1.4"><rect x="37" y="181.5" width="5.5" height="5.5" rx="0.8"/><rect x="45.5" y="181.5" width="5.5" height="5.5" rx="0.8"/><rect x="37" y="189.5" width="5.5" height="5.5" rx="0.8"/><rect x="45.5" y="189.5" width="5.5" height="5.5" rx="0.8"/></g>
<!-- move -->
<path d="M44,201.5 V215.5 M37,208.5 H51" stroke="#2a5a9a" stroke-width="1.8"/>
<path d="M44,201 L41,204.5 H47 Z M44,216 L41,212.5 H47 Z M36.5,208.5 L40,205.5 V211.5 Z M51.5,208.5 L48,205.5 V211.5 Z" fill="#2a5a9a"/>
<!-- rotate -->
<path d="M40,224 Q36.5,227 37.5,231.5 Q39.5,236.5 44.5,236.5 Q50.5,236 51,230 Q51,224.5 45.5,223" fill="none" stroke="#2a5a9a" stroke-width="2"/>
<path d="M37,222 L43,222 L40,227.5 Z" fill="#1a3a70"/>
<!-- scale -->
<rect x="36.5" y="243.5" width="14" height="14" fill="#dce8f2" stroke="#8aa4bc" stroke-width="1.2"/>
<rect x="36.5" y="250" width="7.5" height="7.5" fill="#f0f6fa" stroke="#8aa4bc" stroke-width="1.2"/>
<!-- stretch -->
<path d="M38.5,264.5 H43.5 L50.5,277.5 H38.5 Z" fill="#c4d4e4" stroke="#222" stroke-width="1.4" stroke-linejoin="round"/>
<line x1="38.5" y1="264.5" x2="38.5" y2="277.5" stroke="#222" stroke-width="2.2"/>
<!-- trim -->
<path d="M36.5,291.5 H39.5 M41.5,291.5 H44.5 M46.5,291.5 H49 M50.5,291.5 H52" stroke="#2a2a2a" stroke-width="1.3"/>
<line x1="41.5" y1="296.5" x2="47" y2="286.5" stroke="#2a6ab0" stroke-width="1.6"/>
<!-- extend -->
<path d="M36.5,313 H39.5 M41.5,313 H44" stroke="#2a2a2a" stroke-width="1.4"/>
<line x1="46" y1="318" x2="51" y2="308" stroke="#2a6ab0" stroke-width="1.6"/>
<!-- break at point -->
<path d="M37.5,328.5 H51 V339 H37.5 Z" fill="url(#pb)" stroke="#2a2a2a" stroke-width="1.4"/>
<line x1="43" y1="328.5" x2="45.5" y2="328.5" stroke="#6ab0e0" stroke-width="1.6"/>
<!-- break -->
<path d="M41.5,349.5 H37.5 V359 H41.5 M46.5,349.5 H50.5 V359 H46.5" fill="none" stroke="#2a2a2a" stroke-width="1.5"/>
<!-- join -->
<path d="M36,375 H52" stroke="#1a2a4a" stroke-width="1.4"/>
<path d="M43.5,375 L38.5,372 V378 Z M44.5,375 L49.5,372 V378 Z" fill="#1a2a4a"/>
<!-- fillet -->
<path d="M38.5,402 V396 Q39.5,389.5 45,388.5 H51" fill="none" stroke="#2a2a2a" stroke-width="1.4"/>
<line x1="38.5" y1="395.5" x2="45.5" y2="388.5" stroke="#2a6ab0" stroke-width="1.5"/>
</g>
</svg>

<svg class="a" style="left:0;top:0" width="600" height="409" viewBox="0 0 600 409">
<defs><clipPath id="cc"><rect x="58" y="89" width="518" height="319"/></clipPath></defs>
<g clip-path="url(#cc)" fill="none">
<polyline points="40,111.8 114.4,111.8 114.4,180.5" stroke="#b8b43a" stroke-width="1.3"/>
<path d="M40,118.4 L107.5,118.4 Q111.3,118.4 111.3,122.5 L111.3,178.6 L40,178.6" stroke="#c81ec8" stroke-width="1.6"/>
<line x1="40" y1="165.2" x2="111.3" y2="165.2" stroke="#c81ec8" stroke-width="1.6"/>
<line x1="58" y1="175.5" x2="104" y2="175.5" stroke="#701870" stroke-width="0.8"/>
<line x1="58" y1="121" x2="111" y2="164" stroke="#1f9aa0" stroke-width="0.9"/>
<line x1="111" y1="119" x2="58" y2="160.7" stroke="#1f9aa0" stroke-width="0.9"/>
<line x1="58" y1="145.4" x2="111" y2="145.4" stroke="#1f9aa0" stroke-width="0.9"/>
<circle cx="81" cy="143.5" r="3.4" stroke="#2cc0c8" stroke-width="1.3"/>
<line x1="113.5" y1="112.5" x2="58" y2="126" stroke="#7a6058" stroke-width="0.9"/>
<line x1="58" y1="129" x2="111" y2="144.7" stroke="#7a6058" stroke-width="0.9"/>
<ellipse cx="66.5" cy="170.3" rx="7" ry="3" fill="#a81ab8" stroke="#c020c8" stroke-width="0.8"/>
<rect x="62.5" y="169" width="8" height="2.6" fill="#d850e0"/>
<g fill="#38c4cc"><rect x="85.8" y="168" width="3.4" height="3.4"/><rect x="89.8" y="168" width="3.4" height="3.4"/><rect x="93.8" y="168" width="3.4" height="3.4"/><rect x="97.8" y="168" width="3.4" height="3.4"/><rect x="101.8" y="168" width="3.6" height="3.4"/><rect x="106" y="168" width="4" height="3.4"/></g>
<rect x="104" y="173.5" width="5.5" height="4" fill="none" stroke="#a020a8" stroke-width="1.1"/>
<polyline points="114.4,180.6 137.2,180.6" stroke="#b8b8b8" stroke-width="1.2"/>
<polyline points="157,111.2 137.2,111.2 137.2,402 114.6,402 114.6,410" stroke="#969696" stroke-width="1.4"/>
<line x1="130" y1="180.5" x2="130" y2="236" stroke="#c8c8c8" stroke-width="1.2"/>
<line x1="130" y1="346" x2="130" y2="402" stroke="#c8c8c8" stroke-width="1.2"/>
<polyline points="127,207 122.1,207 122.1,263 127,263" stroke="#3a8a8a" stroke-width="1.7"/>
<polyline points="127,318 122.1,318 122.1,374.4 127,374.4" stroke="#3a8a8a" stroke-width="1.7"/>
<path d="M143.3,112.5 a2.375,2.375 0 0 0 0,4.75 a2.375,2.375 0 0 1 0,4.75 a2.375,2.375 0 0 0 0,4.75 a2.375,2.375 0 0 1 0,4.75 a2.375,2.375 0 0 0 0,4.75 a2.375,2.375 0 0 1 0,4.75 a2.375,2.375 0 0 0 0,4.75 a2.375,2.375 0 0 1 0,4.75 a2.375,2.375 0 0 0 0,4.75 a2.375,2.375 0 0 1 0,4.75 a2.375,2.375 0 0 0 0,4.75 a2.375,2.375 0 0 1 0,4.75 a2.375,2.375 0 0 0 0,4.75 a2.375,2.375 0 0 1 0,4.75 a2.375,2.375 0 0 0 0,4.75 a2.375,2.375 0 0 1 0,4.75 a2.375,2.375 0 0 0 0,4.75" stroke="#a8a8a8" stroke-width="1.3"/>
<path d="M146.9,112.5 a2.375,2.375 0 0 0 0,4.75 a2.375,2.375 0 0 1 0,4.75 a2.375,2.375 0 0 0 0,4.75 a2.375,2.375 0 0 1 0,4.75 a2.375,2.375 0 0 0 0,4.75 a2.375,2.375 0 0 1 0,4.75 a2.375,2.375 0 0 0 0,4.75 a2.375,2.375 0 0 1 0,4.75 a2.375,2.375 0 0 0 0,4.75 a2.375,2.375 0 0 1 0,4.75 a2.375,2.375 0 0 0 0,4.75 a2.375,2.375 0 0 1 0,4.75 a2.375,2.375 0 0 0 0,4.75" stroke="#bc8440" stroke-width="1.4"/>
<line x1="148" y1="171" x2="148" y2="181" stroke="#e89030" stroke-width="2"/>
<line x1="142.8" y1="190" x2="142.8" y2="209" stroke="#a0a0a0" stroke-width="1"/>
<ellipse cx="142.8" cy="202" rx="1.4" ry="3" fill="#a8a8a8"/>
<line x1="142.7" y1="372.6" x2="142.7" y2="392" stroke="#a0a0a0" stroke-width="1"/>
<ellipse cx="142.7" cy="380" rx="1.4" ry="3" fill="#a8a8a8"/>
<path d="M143,392 a2.375,2.375 0 0 1 0,4.75 a2.375,2.375 0 0 0 0,4.75 a2.375,2.375 0 0 1 0,4.75 a2.375,2.375 0 0 0 0,4.75" stroke="#b0b0b0" stroke-width="1.2"/>
<path d="M146.5,409 L148.7,400.5 L150.5,409 Z" fill="#e09040"/>
<line x1="155.1" y1="114" x2="155.1" y2="409" stroke="#3e9a90" stroke-width="1.7" stroke-dasharray="2.4 3.2"/>
<line x1="161" y1="111.3" x2="556" y2="111.3" stroke="#4aa4a4" stroke-width="1.5" stroke-dasharray="2.4 3.5"/>
<line x1="557.2" y1="114" x2="557.2" y2="409" stroke="#3aa0a0" stroke-width="1.5" stroke-dasharray="2.6 3.2"/>
<line x1="557" y1="111.2" x2="576" y2="111.2" stroke="#b8b8b8" stroke-width="1.8"/>
<path d="M127,412 L127,190 Q127.3,160 128.3,142 L130.6,116 Q131.8,104.3 137,103.9 L164,103.9 Q168.5,103.9 169.6,109.5 L171.6,125 Q173,140 173.1,165 L173.1,412" stroke="#e41d24" stroke-width="5.1" stroke-linejoin="round"/>
<line x1="281" y1="307" x2="281" y2="395" stroke="#a9a9a9" stroke-width="1.5"/>
<line x1="236" y1="350.6" x2="325" y2="350.6" stroke="#a9a9a9" stroke-width="1.5"/>
</g>
</svg>

<div class="a" style="left:324px;top:383px;width:62px;height:20px;background:#fff"></div>
<div class="a" style="left:328px;top:385px;width:49px;height:15px;background:#3b94f0"></div>
<div class="a" style="left:328px;top:384.5px;font-size:13.5px;color:#fff;line-height:17px;transform:scaleX(0.87);transform-origin:0 0">59208.69</div>
<div class="a" style="left:390px;top:383px;width:62px;height:20px;background:#17136a;border:1px solid #8a88b0"></div>
<div class="a" style="left:394px;top:384.5px;font-size:13.5px;color:#c8c2e0;line-height:17px;transform:scaleX(0.86);transform-origin:0 0">62320.28</div>
</div></body></html>
